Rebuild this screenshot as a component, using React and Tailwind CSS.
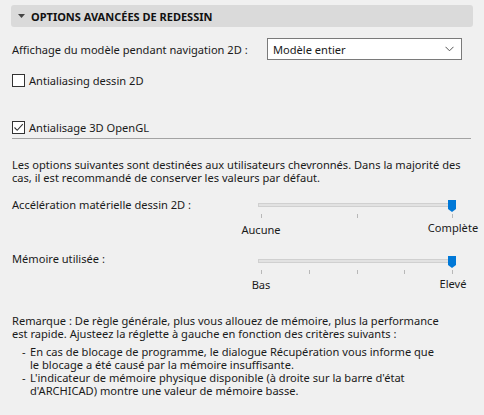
import React from "react";

function Checkbox({ checked, label }) {
  return (
    <div className="flex items-center h-[14px]">
      <div className="w-[13px] h-[13px] border border-[#333333] bg-white flex items-center justify-center">
        {checked && (
          <svg width="11" height="11" viewBox="0 0 11 11">
            <path d="M1.5 5.5 L4.2 8.3 L9.8 2.2" fill="none" stroke="#333" strokeWidth="1.1" />
          </svg>
        )}
      </div>
      <span className="ml-[4px]">{label}</span>
    </div>
  );
}

function Slider({ ticks }) {
  return (
    <div className="w-[198px]">
      <div className="relative h-[12px]">
        <div className="absolute left-0 right-0 top-[3px] h-[4px] bg-[#e2e2e2] border border-[#d0d0d0]" />
        <svg className="absolute right-0 top-0" width="8" height="12" viewBox="0 0 8 12">
          <path d="M0 0 H8 V9 L4 12 L0 9 Z" fill="#0078d7" />
        </svg>
      </div>
      <div className="flex justify-between px-[3px] mt-[2px] h-[4px]">
        {Array.from({ length: ticks }).map((_, i) => (
          <div key={i} className="w-px h-[4px] bg-[#b8b8b8]" />
        ))}
      </div>
    </div>
  );
}

function SliderRow({ label, ticks, left, right, leftPad, labelShift, offset }) {
  return (
    <div className={offset}>
      <div className="flex items-start">
        <span className={"w-[246px] leading-[12px] " + labelShift}>{label}</span>
        <Slider ticks={ticks} />
      </div>
      <div className="flex justify-between items-start w-[192px] ml-[249px] mt-[3px]">
        <div className={"w-0 flex justify-center whitespace-nowrap " + leftPad}>{left}</div>
        <div className="w-0 flex justify-center whitespace-nowrap">{right}</div>
      </div>
    </div>
  );
}

export default function App() {
  return (
    <div className="w-[484px] h-[415px] bg-[#f0f0f0] pt-[5px] px-[11px] text-[11.1px] leading-[13px] text-[#1a1a1a] font-['Noto_Sans',sans-serif] overflow-hidden">
      <div className="h-[22px] bg-[#dadada] rounded-[3px] flex items-center pl-[7px]">
        <svg width="7" height="5" viewBox="0 0 7 5">
          <path d="M0 0 H7 L3.5 4 Z" fill="#444" />
        </svg>
        <span className="ml-[6px] font-bold text-[11px] text-[#111]">OPTIONS AVANCÉES DE REDESSIN</span>
      </div>

      <div className="pl-[1px]">
        <div className="flex items-center justify-between mt-[11px] pr-[11px]">
          <span>Affichage du modèle pendant navigation 2D :</span>
          <div className="w-[195px] h-[22px] border border-[#7a7a7a] bg-white flex items-center justify-between pl-[5px] pr-[7px]">
            <span>Modèle entier</span>
            <svg width="9" height="6" viewBox="0 0 9 6">
              <path d="M0.5 0.8 L4.5 4.8 L8.5 0.8" fill="none" stroke="#555" strokeWidth="1" />
            </svg>
          </div>
        </div>

        <div className="mt-[13px]">
          <Checkbox label="Antialiasing dessin 2D" />
        </div>
        <div className="mt-[33px]">
          <Checkbox checked label="Antialisage 3D OpenGL" />
        </div>
        <div className="mt-[4px] h-px bg-[#a3a3a3] mr-[2px]" />

        <p className="mt-[19px] w-[464px]">
          Les options suivantes sont destinées aux utilisateurs chevronnés. Dans la majorité des cas, il est recommandé de conserver les valeurs par défaut.
        </p>

        <SliderRow
          offset="mt-[16px]"
          label="Accélération matérielle dessin 2D :"
          ticks={3}
          left="Aucune"
          right="Complète"
          leftPad="pt-[2px]"
          labelShift="-mt-[1px]"
        />

        <SliderRow
          offset="mt-[20px]"
          label="Mémoire utilisée :"
          ticks={5}
          left="Bas"
          right="Elevé"
          leftPad="pt-[1px]"
          labelShift="-mt-[3px]"
        />

        <p className="mt-[23px] w-[435px]">
          Remarque : De règle générale, plus vous allouez de mémoire, plus la performance est rapide. Ajusteez la réglette à gauche en fonction des critères suivants :
        </p>
        <div className="mt-[5px] pl-[10px] w-[426px]">
          <div className="flex">
            <span className="w-[8px] shrink-0">-</span>
            <span>En cas de blocage de programme, le dialogue Récupération vous informe que le blocage a été causé par la mémoire insuffisante.</span>
          </div>
          <div className="flex">
            <span className="w-[8px] shrink-0">-</span>
            <span>L'indicateur de mémoire physique disponible (à droite sur la barre d'état d'ARCHICAD) montre une valeur de mémoire basse.</span>
          </div>
        </div>
      </div>
    </div>
  );
}
